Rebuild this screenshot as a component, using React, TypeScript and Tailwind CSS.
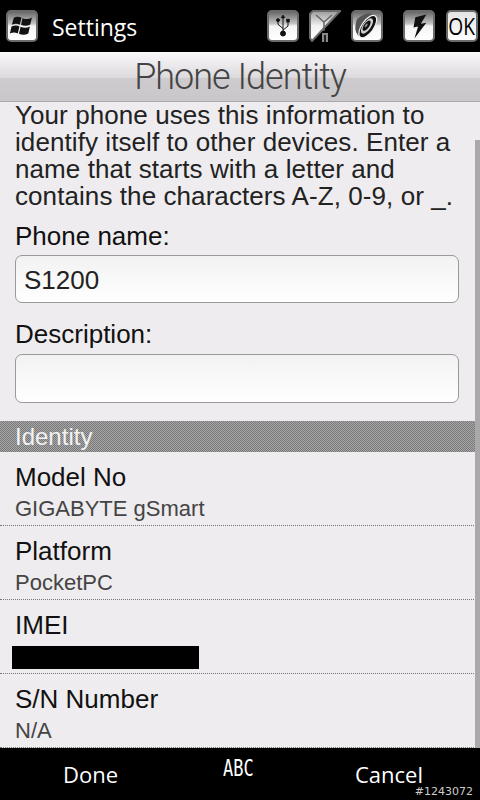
import type { ReactNode } from 'react';

const TrayButton = ({ children, className = '' }: { children: ReactNode; className?: string }) => (
  <div className={`w-[32px] h-[32px] rounded-[5px] border-2 border-[#6b6b6b] bg-[linear-gradient(#6a6a6a_0%,#c4c4c4_42%,#f4f4f4_50%,#ffffff_100%)] flex items-center justify-center overflow-hidden ${className}`}>
    {children}
  </div>
);

const details = [
  { label: 'Model No', value: 'GIGABYTE gSmart' },
  { label: 'Platform', value: 'PocketPC' },
  { label: 'IMEI', value: '' },
  { label: 'S/N Number', value: 'N/A' },
];

export default function App() {
  return (
    <div className="relative w-[480px] h-[800px] overflow-hidden flex flex-col bg-[#eeecee] font-['Liberation_Sans',sans-serif]">
      <header className="h-[52px] shrink-0 bg-black flex items-center text-white">
        <TrayButton className="ml-[6px]">
          <svg viewBox="0 0 24 24" className="w-[28px] h-[28px] shrink-0" fill="#111">
            <path d="M5 5c3-1.500 5-1 6.500 0l-1.400 6c-2-1-4-1.200-6.800 0z" />
            <path d="M12.500 5.300c2 1 5 1.200 8-.5l-1.400 6c-3 1.500-5.500 1.200-7.900.2z" />
            <path d="M3 12.400c3-1.200 5-1 6.800 0l-1.400 6c-2-1-4-1.200-6.800 0z" />
            <path d="M10.800 12.600c2.500 1 5 1.300 8-.2l-1.400 6c-3 1.500-5.500 1.200-8 .2z" />
          </svg>
        </TrayButton>
        <span className="ml-[14px] mt-[2px] font-['Open_Sans',sans-serif] text-[23px] leading-none">Settings</span>
        <div className="ml-auto mr-[2px] flex items-center">
          <TrayButton>
            <svg viewBox="0 0 24 28" className="w-[20px] h-[26px]" fill="#111" stroke="#111" strokeWidth="1.200">
              <path d="M12 2v20M12 17 6 12V8M12 19l6-5v-5" fill="none" />
              <path d="M12 1l2 3h-4z" />
              <circle cx="6" cy="7" r="1.800" />
              <rect x="16.500" y="6" width="3" height="3" />
              <circle cx="12" cy="23" r="3" />
            </svg>
          </TrayButton>
          <div className="ml-[10px] w-[32px] h-[32px]">
            <svg viewBox="0 0 32 32" className="w-[32px] h-[32px]">
              <defs>
                <linearGradient id="sig" x1="0" y1="0" x2="0" y2="1">
                  <stop offset="0" stopColor="#9a9a9a" />
                  <stop offset="0.5" stopColor="#f2f2f2" />
                  <stop offset="1" stopColor="#ffffff" />
                </linearGradient>
              </defs>
              <path d="M4 1h27L3 31 1 28V4z" fill="url(#sig)" stroke="#6b6b6b" strokeWidth="2" />
              <path d="M7 5l8 7 8-7M15 12v9" fill="none" stroke="#666" strokeWidth="1.500" />
              <rect x="13" y="23" width="6" height="9" fill="#888" />
              <rect x="15" y="25" width="2" height="7" fill="#222" />
            </svg>
          </div>
          <TrayButton className="ml-[10px]">
            <svg viewBox="0 0 28 28" className="w-[28px] h-[28px] shrink-0">
              <g transform="rotate(35 14 14)">
                <path d="M14 1C8 1 4 6 2 14c2 8 6 13 12 13z" fill="#555" />
                <ellipse cx="15" cy="14" rx="6" ry="13" fill="#111" stroke="#f0f0f0" strokeWidth="1.200" />
                <ellipse cx="14" cy="14" rx="4" ry="9" fill="#cfcfcf" />
                <ellipse cx="13.500" cy="14" rx="2.600" ry="6" fill="#111" />
                <ellipse cx="13" cy="14" rx="1" ry="2.200" fill="#888" />
              </g>
            </svg>
          </TrayButton>
          <TrayButton className="ml-[20px]">
            <svg viewBox="0 0 24 28" className="w-[22px] h-[27px]" fill="#111">
              <path d="M20 1 8 4 6 15l5-1-4 13 13-17-6 1 6-10z" />
            </svg>
          </TrayButton>
          <div className="ml-[11px] w-[32px] h-[32px] rounded-[5px] border-2 border-[#6b6b6b] bg-gradient-to-b from-[#e4e4e4] to-white flex items-center justify-center overflow-hidden">
            <span className="text-black font-['Open_Sans',sans-serif] text-[24px] scale-x-[0.8] leading-none">OK</span>
          </div>
        </div>
      </header>

      <div className="h-[50px] shrink-0 pt-[1px] border-b border-[#aaa] bg-[linear-gradient(#fbf9fb_0%,#dcdadc_52%,#cdcbcd_54%,#c9c7c9_100%)] flex justify-center items-center">
        <h1 className="font-['Roboto',sans-serif] font-light text-[36px] tracking-[-1px] leading-none text-[#444]">Phone Identity</h1>
      </div>

      <main className="flex-1 flex flex-col">
        <div className="px-[15px]">
          <p className="text-[26px] leading-[27px] tracking-[0.08px] text-[#222]">
            Your phone uses this information to identify itself to other devices. Enter a name that starts with a letter and contains the characters A-Z, 0-9, or _.
          </p>
          <div className="mt-[12px] text-[26px] leading-[28px] text-[#111]">Phone name:</div>
          <div className="mt-[5px] mr-[6px] h-[48px] pt-[3px] rounded-[7px] border border-[#999] bg-gradient-to-b from-[#f2f2f2] to-white flex items-center px-[8px] text-[26px] text-[#222]">S1200</div>
          <div className="mt-[17px] text-[26px] leading-[28px] text-[#111]">Description:</div>
          <div className="mt-[6px] mr-[6px] h-[49px] rounded-[7px] border border-[#999] bg-gradient-to-b from-[#f2f2f2] to-white" />
        </div>
        <div className="mt-[18px] h-[31px] flex items-center px-[15px] text-[24px] text-[#f2f2f2] bg-[repeating-conic-gradient(#777777_0_25%,#a8a8a8_0_50%)] bg-[length:2px_2px]">Identity</div>
        {details.map((d) => (
          <div key={d.label} className="h-[74px] border-b border-dotted border-[#777] px-[15px] pt-[11px]">
            <div className="text-[26px] leading-[28px] text-[#111]">{d.label}</div>
            {d.value ? (
              <div className="mt-[5px] text-[22px] leading-[25px] text-[#444]">{d.value}</div>
            ) : (
              <div className="mt-[7px] -ml-[3px] w-[187px] h-[23px] bg-black" />
            )}
          </div>
        ))}
      </main>

      <footer className="h-[52px] shrink-0 bg-black text-white flex items-center font-['Open_Sans',sans-serif] text-[22px]">
        <span className="ml-[63px]">Done</span>
        <span className="ml-[105px] -mt-[11px] font-['DejaVu_Sans_Mono',monospace] text-[17px] scale-y-[1.35]">ABC</span>
        <span className="ml-auto mr-[57px]">Cancel</span>
      </footer>

      <div className="absolute right-0 top-[140px] w-[5px] h-[608px] bg-[#aaa8aa]" />
      <span className="absolute right-[7px] bottom-[3px] font-['DejaVu_Sans',sans-serif] text-[11px] leading-none text-[#ccc]">#1243072</span>
    </div>
  );
}
